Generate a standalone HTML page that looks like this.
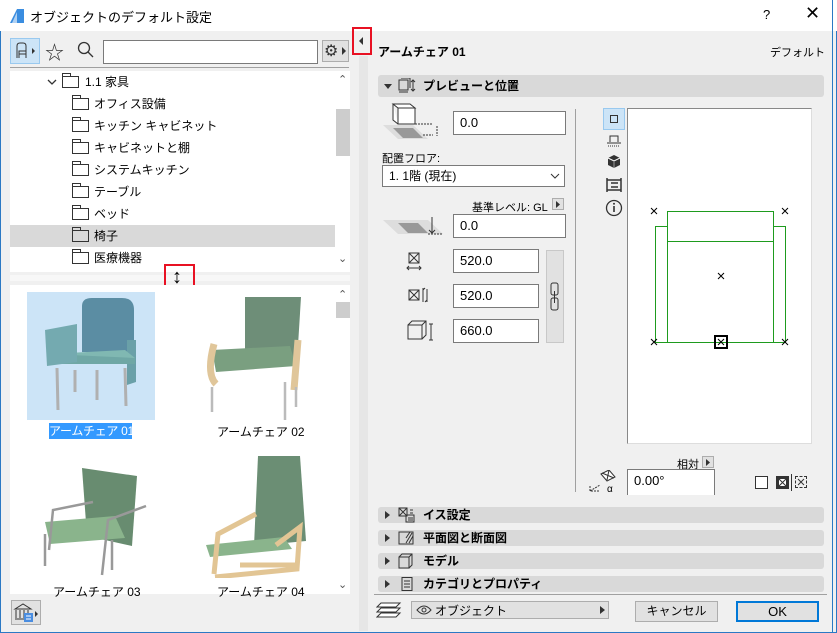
<!DOCTYPE html>
<html><head><meta charset="utf-8"><style>
*{box-sizing:border-box;margin:0;padding:0}
body{width:837px;height:633px;overflow:hidden;background:#f0f0f0;font-family:"Liberation Sans","Noto Sans CJK JP",sans-serif;font-size:12px;color:#000;position:relative}
.a{position:absolute}
.inp{position:absolute;background:#fff;border:1px solid #7a7a7a;font-size:13px;padding-left:6px;line-height:22px}
.sec{position:absolute;left:378px;width:446px;background:#d9d9d9;border-radius:3px;font-weight:bold;font-size:12px}
.row{position:absolute;left:10px;width:325px;height:22px;line-height:22px;font-size:12px}
.fold{position:absolute;width:17px;height:12px;border:1px solid #333;top:5px}
.fold:before{content:"";position:absolute;left:-1px;top:-4px;width:7px;height:3px;border:1px solid #333;border-bottom:none}
.lbl{position:absolute;font-size:12px;white-space:nowrap}
</style></head><body>
<div class="a" style="left:0;top:0;width:837px;height:633px;border:1px solid #2b79c4;border-top:none"></div>
<div class="a" style="left:0;top:0;width:837px;height:31px;background:#fff"></div>
<svg class="a" style="left:9px;top:8px" width="16" height="16"><path d="M1 15L8 1h7v14z" fill="#3a8de0"/><path d="M3 15L8 4v11z" fill="#fff" opacity=".6"/></svg>
<div class="a" style="left:30px;top:7px;font-size:13px">オブジェクトのデフォルト設定</div>
<div class="a" style="left:763px;top:7px;font-size:13px">?</div>
<div class="a" style="left:805px;top:3px;font-size:18px;font-weight:300">✕</div>

<div class="a" style="left:10px;top:38px;width:30px;height:26px;background:#cce4f7;border:1px solid #99c9ef"></div>
<svg class="a" style="left:14px;top:42px" width="24" height="18"><path d="M3 16V4q0-3 3-3h3q3 0 3 3v5H5v7M12 9v7M5 12h7" fill="none" stroke="#333"/><path d="M18 6l3 3-3 3z" fill="#333"/></svg>
<div class="a" style="left:45px;top:38px;font-size:19px;color:#333">☆</div>
<svg class="a" style="left:77px;top:41px" width="18" height="18"><circle cx="7" cy="7" r="5.5" fill="none" stroke="#333" stroke-width="1.3"/><path d="M11 11l5 5" stroke="#333" stroke-width="1.3"/></svg>
<div class="a" style="left:103px;top:40px;width:215px;height:24px;background:#fff;border:1px solid #7a7a7a"></div>
<div class="a" style="left:322px;top:40px;width:27px;height:22px;background:#e1e1e1;border:1px solid #adadad"></div>
<div class="a" style="left:324px;top:41px;font-size:16px;color:#333">⚙</div>
<svg class="a" style="left:341px;top:46px" width="6" height="10"><path d="M1 1l4 4-4 4z" fill="#333"/></svg>
<div class="a" style="left:10px;top:67px;width:339px;height:1px;background:#a0a0a0"></div>
<div class="a" style="left:352px;top:27px;width:20px;height:28px;border:2px solid #e81123"></div>
<svg class="a" style="left:358px;top:36px" width="6" height="10"><path d="M5 1L1 5l4 4z" fill="#333"/></svg>
<div class="a" style="left:359px;top:56px;width:9px;height:575px;background:#e6e6e6"></div>

<div class="a" style="left:10px;top:71px;width:325px;height:201px;background:#fff"></div>
<div class="a" style="left:335px;top:71px;width:15px;height:201px;background:#fff"></div>
<div class="a" style="left:336px;top:109px;width:14px;height:47px;background:#cdcdcd"></div>
<div class="a" style="left:338px;top:73px;font-size:11px;color:#555">⌃</div>
<div class="a" style="left:338px;top:252px;font-size:11px;color:#555">⌄</div>
<div class="row" style="top:71px"><svg class="a" style="left:37px;top:8px" width="10" height="7"><path d="M1 1l4 4 4-4" fill="none" stroke="#333" stroke-width="1.3"/></svg><div class="fold" style="left:52px"></div><span class="a" style="left:75px">1.1 家具</span></div>
<div class="row" style="top:93px"><div class="fold" style="left:62px"></div><span class="a" style="left:84px">オフィス設備</span></div>
<div class="row" style="top:115px"><div class="fold" style="left:62px"></div><span class="a" style="left:84px">キッチン キャビネット</span></div>
<div class="row" style="top:137px"><div class="fold" style="left:62px"></div><span class="a" style="left:84px">キャビネットと棚</span></div>
<div class="row" style="top:159px"><div class="fold" style="left:62px"></div><span class="a" style="left:84px">システムキッチン</span></div>
<div class="row" style="top:181px"><div class="fold" style="left:62px"></div><span class="a" style="left:84px">テーブル</span></div>
<div class="row" style="top:203px"><div class="fold" style="left:62px"></div><span class="a" style="left:84px">ベッド</span></div>
<div class="row" style="top:225px;background:#d9d9d9"><div class="fold" style="left:62px"></div><span class="a" style="left:84px">椅子</span></div>
<div class="row" style="top:247px"><div class="fold" style="left:62px"></div><span class="a" style="left:84px">医療機器</span></div>
<div class="a" style="left:10px;top:275px;width:340px;height:6px;background:#f7f7f7"></div>
<div class="a" style="left:164px;top:264px;width:31px;height:30px;border:2px solid #e81123"></div>
<div class="a" style="left:172px;top:266px;font-size:20px;font-weight:bold">↕</div>

<div class="a" style="left:10px;top:285px;width:325px;height:309px;background:#fff"></div>
<div class="a" style="left:335px;top:285px;width:15px;height:309px;background:#fff"></div>
<div class="a" style="left:336px;top:302px;width:14px;height:16px;background:#cdcdcd"></div>
<div class="a" style="left:338px;top:288px;font-size:11px;color:#555">⌃</div>
<div class="a" style="left:338px;top:578px;font-size:11px;color:#555">⌄</div>
<div class="a" style="left:27px;top:292px;width:128px;height:128px;background:#cce4f7"></div>
<svg class="a" style="left:27px;top:292px" width="128" height="128">
<path d="M55 14q0-8 10-8h30q12 0 12 12v42H55z" fill="#5b8da3"/>
<path d="M100 48h9v42l-9 3z" fill="#6aa0a8"/>
<path d="M22 62l76-4 10 8-78 6z" fill="#80b8b2"/><path d="M22 62v10l86 0v-6z" fill="#6fa7a5"/>
<path d="M18 38l32-6v38l-30 4z" fill="#74aab0"/>
<path d="M30 76l1 42M98 76l1 38M70 78v30M48 78v22" stroke="#b0b0b0" stroke-width="3"/>
</svg>
<div class="a" style="left:49px;top:423px;width:83px;height:16px;background:#3399ff;color:#fff;font-size:12px;line-height:16px;text-align:center;white-space:nowrap;letter-spacing:-0.3px;overflow:hidden">アームチェア 01</div>
<svg class="a" style="left:190px;top:292px" width="128" height="128">
<path d="M55 5h56l-4 65H55z" fill="#6e8e78"/>
<path d="M22 58l78-4 6 20-80 6z" fill="#7a9f80"/>
<path d="M24 52q-8 30 2 40M108 48l-4 50" stroke="#e0c69a" stroke-width="7" fill="none"/>
<path d="M22 95v25M95 90v38M106 95v20" stroke="#bbb" stroke-width="2.5"/>
</svg>
<div class="lbl" style="left:217px;top:423px">アームチェア 02</div>
<svg class="a" style="left:27px;top:450px" width="128" height="128">
<path d="M55 18l55 8-5 70-45-10z" fill="#688c70"/>
<path d="M18 72l70-6 10 22-75 6z" fill="#8ab48c"/>
<path d="M22 100l4-40 40-8M75 125l6-55 38-14M18 84v32M85 90v30" stroke="#999" stroke-width="2.5" fill="none"/>
</svg>
<div class="lbl" style="left:53px;top:583px">アームチェア 03</div>
<svg class="a" style="left:190px;top:450px" width="128" height="128">
<path d="M68 6h42l6 85-52 5z" fill="#6b8e74"/>
<path d="M16 95l78-8 8 12-82 8z" fill="#8ab48c"/>
<path d="M24 124l4-40 38-20M86 95l24-18-3 42-82 8M50 115h55" stroke="#e2c594" stroke-width="5" fill="none"/>
</svg>
<div class="lbl" style="left:217px;top:583px">アームチェア 04</div>
<div class="a" style="left:11px;top:600px;width:30px;height:25px;background:#e1e1e1;border:1px solid #adadad"></div>
<svg class="a" style="left:13px;top:602px" width="26" height="22"><path d="M2 7l8-5 8 5zM3 8v8M7 8v8M11 8v8M15 8v8M2 17h16" stroke="#333" fill="none"/><rect x="11" y="11" width="9" height="9" fill="#4a8de0"/><path d="M13 14h5M13 17h5" stroke="#fff"/><path d="M22 9l3 3-3 3z" fill="#333"/></svg>

<div class="a" style="left:378px;top:43px;font-weight:bold;font-size:12px">アームチェア 01</div>
<div class="a" style="left:770px;top:44px;font-size:11px">デフォルト</div>
<div class="a" style="left:832px;top:0;width:1px;height:633px;background:#2b79c4"></div>

<div class="sec" style="top:75px;height:22px;line-height:22px"><svg class="a" style="left:6px;top:9px" width="8" height="5"><path d="M0 0h8L4 5z" fill="#333"/></svg><svg class="a" style="left:20px;top:3px" width="20" height="16"><rect x="1" y="2" width="9" height="10" fill="none" stroke="#333"/><path d="M3 0h9v10M15 2v11M13 4l2-2 2 2M13 11l2 2 2-2M1 14h9" stroke="#333" fill="none"/></svg><span class="a" style="left:45px">プレビューと位置</span></div>

<svg class="a" style="left:383px;top:103px" width="62" height="36"><path d="M0 22h30l15 14H15z" fill="#ddd"/><path d="M10 25h20l10 10H20z" fill="#999"/><path d="M15 5h17v16H15zM10 1h17l5 4H15zM10 1v16l5 4" fill="#fff" stroke="#333"/><path d="M32 21h17M40 32h10M54 23v10" stroke="#333" stroke-dasharray="2 1"/></svg>
<div class="inp" style="left:453px;top:111px;width:113px;height:24px">0.0</div>
<div class="a" style="left:382px;top:150px;font-size:11px">配置フロア:</div>
<div class="inp" style="left:382px;top:165px;width:183px;height:22px;line-height:20px;font-size:12px">1. 1階 (現在)</div>
<svg class="a" style="left:550px;top:173px" width="10" height="6"><path d="M1 1l4 4 4-4" fill="none" stroke="#333"/></svg>
<div class="a" style="left:472px;top:199px;font-size:11px;white-space:nowrap">基準レベル: GL</div>
<div class="a" style="left:552px;top:198px;width:12px;height:12px;background:#e1e1e1;border:1px solid #adadad"></div>
<svg class="a" style="left:556px;top:201px" width="5" height="7"><path d="M0 0l4 3.5L0 7z" fill="#333"/></svg>
<svg class="a" style="left:383px;top:215px" width="62" height="24"><path d="M0 5h45l15 14H15z" fill="#ddd"/><path d="M15 8h20l10 10H25z" fill="#999"/><path d="M49 2v16M46 15l3 3 3-3" stroke="#333" fill="none"/><path d="M45 19h15" stroke="#333" stroke-dasharray="2 1"/></svg>
<div class="inp" style="left:453px;top:214px;width:113px;height:24px">0.0</div>
<svg class="a" style="left:406px;top:251px" width="20" height="24"><rect x="3" y="2" width="10" height="10" fill="none" stroke="#333"/><path d="M3 2l10 10M13 2L3 12M1 17h14M3 15l-2 2 2 2M13 15l2 2-2 2" stroke="#333" fill="none"/></svg>
<div class="inp" style="left:453px;top:249px;width:86px;height:24px">520.0</div>
<svg class="a" style="left:408px;top:287px" width="24" height="18"><rect x="1" y="3" width="10" height="10" fill="none" stroke="#333"/><path d="M1 3l10 10M11 3L1 13M15 1v14M19 2v13M17 1l-2 2M17 15l2-2" stroke="#333" fill="none"/></svg>
<div class="inp" style="left:453px;top:284px;width:86px;height:24px">520.0</div>
<svg class="a" style="left:407px;top:320px" width="28" height="24"><path d="M1 5h14v14H1zM1 5l4-4h14v14l-4 4M15 5l4-4" fill="none" stroke="#333"/><path d="M24 4v16M22 4h4M22 20h4" stroke="#333"/></svg>
<div class="inp" style="left:453px;top:319px;width:86px;height:24px">660.0</div>
<div class="a" style="left:546px;top:250px;width:18px;height:93px;background:#e1e1e1;border:1px solid #c8c8c8"></div>
<svg class="a" style="left:550px;top:282px" width="10" height="30"><rect x="1" y="1" width="7" height="12" rx="2" fill="none" stroke="#333"/><rect x="1" y="16" width="7" height="12" rx="2" fill="none" stroke="#333"/><path d="M4.5 9v12" stroke="#333"/></svg>
<div class="a" style="left:575px;top:109px;width:1px;height:383px;background:#a0a0a0"></div>

<div class="a" style="left:603px;top:108px;width:22px;height:22px;background:#cce4f7;border:1px solid #99c9ef"></div>
<div class="a" style="left:610px;top:115px;width:8px;height:8px;border:1.3px solid #333"></div>
<svg class="a" style="left:606px;top:134px" width="16" height="14"><path d="M4 8V2h8v6M1 9h14" stroke="#333" fill="none"/><path d="M2 12h12" stroke="#333" stroke-dasharray="1 1"/></svg>
<svg class="a" style="left:607px;top:154px" width="14" height="15"><path d="M7 1l6 3v7l-6 3-6-3V4z" fill="#333"/><path d="M1 4l6 3 6-3" stroke="#fff" fill="none"/><path d="M7 7v7" stroke="#999"/></svg>
<svg class="a" style="left:606px;top:177px" width="16" height="16"><path d="M1 1v14M15 1v14M1 3h14M1 13h14M5 6h7M5 10h7" stroke="#333" stroke-width="1.5" fill="none"/></svg>
<svg class="a" style="left:605px;top:199px" width="18" height="18"><circle cx="9" cy="9" r="7.5" fill="none" stroke="#333" stroke-width="1.3"/><path d="M9 7v6" stroke="#333" stroke-width="1.6"/><circle cx="9" cy="4.8" r="1" fill="#333"/></svg>

<div class="a" style="left:627px;top:108px;width:185px;height:336px;background:#fff;border:1px solid #888;border-right-color:#ddd;border-bottom-color:#ddd"></div>
<svg class="a" style="left:627px;top:108px" width="185" height="336">
<g stroke="#1e9b1e" fill="none"><rect x="28.5" y="118.5" width="130" height="116"/><rect x="40.5" y="103.5" width="106" height="131" fill="#fff"/><path d="M40 133.5h106"/></g>
<g stroke="#000" fill="none"><path d="M24 100l6 6M30 100l-6 6M155 100l6 6M161 100l-6 6M91 165l6 6M97 165l-6 6M24 231l6 6M30 231l-6 6M155 231l6 6M161 231l-6 6M91 231l6 6M97 231l-6 6"/><rect x="88" y="228" width="12" height="12" stroke-width="2"/></g>
</svg>
<div class="a" style="left:677px;top:456px;font-size:11px">相対</div>
<div class="a" style="left:702px;top:456px;width:12px;height:12px;background:#e1e1e1;border:1px solid #adadad"></div>
<svg class="a" style="left:706px;top:459px" width="5" height="7"><path d="M0 0l4 3.5L0 7z" fill="#333"/></svg>
<svg class="a" style="left:588px;top:470px" width="30" height="24"><path d="M13 4l8-4 6 7-8 4z" fill="#fff" stroke="#333"/><path d="M14 3l12 5M21 0l-2 10" stroke="#333"/><path d="M2 16v5h10M2 21l10-6" stroke="#333" stroke-dasharray="2 1" fill="none"/><text x="19" y="22" font-size="10" font-family="Liberation Sans">α</text></svg>
<div class="inp" style="left:627px;top:469px;width:88px;height:26px;border-bottom:none">0.00°</div>
<div class="a" style="left:755px;top:476px;width:13px;height:13px;background:#fff;border:1px solid #333"></div>
<div class="a" style="left:776px;top:476px;width:13px;height:13px;background:#333"></div>
<svg class="a" style="left:776px;top:476px" width="13" height="13"><rect x="3" y="3" width="7" height="7" fill="#fff"/><path d="M3 3l7 7M10 3l-7 7" stroke="#333"/></svg>
<div class="a" style="left:791px;top:474px;width:1px;height:17px;background:#333"></div>
<div class="a" style="left:795px;top:476px;width:12px;height:12px;border:1px dashed #333"></div>
<svg class="a" style="left:795px;top:476px" width="12" height="12"><path d="M3 3l6 6M9 3l-6 6" stroke="#333"/></svg>

<div class="sec" style="top:507px;height:16px;line-height:16px"><svg class="a" style="left:7px;top:4px" width="5" height="8"><path d="M0 0l5 4-5 4z" fill="#333"/></svg><svg class="a" style="left:20px;top:0" width="18" height="16"><rect x="1" y="1" width="8" height="8" fill="none" stroke="#333"/><path d="M1 1l8 8M9 1l-8 8M8 8h8v7H8zM10 11h5M10 13h5M12 3h3M12 6h3" stroke="#333" fill="none"/></svg><span class="a" style="left:45px">イス設定</span></div>
<div class="sec" style="top:530px;height:16px;line-height:16px"><svg class="a" style="left:7px;top:4px" width="5" height="8"><path d="M0 0l5 4-5 4z" fill="#333"/></svg><svg class="a" style="left:20px;top:1px" width="18" height="14"><rect x="1" y="1" width="14" height="12" fill="none" stroke="#333"/><path d="M8 12l6-10M11 12l4-7M8 7l4-6" stroke="#333"/></svg><span class="a" style="left:45px">平面図と断面図</span></div>
<div class="sec" style="top:553px;height:16px;line-height:16px"><svg class="a" style="left:7px;top:4px" width="5" height="8"><path d="M0 0l5 4-5 4z" fill="#333"/></svg><svg class="a" style="left:20px;top:0" width="16" height="16"><path d="M1 4h10v11H1zM1 4l3-3h10v11l-3 3M11 4l3-3" fill="none" stroke="#333"/></svg><span class="a" style="left:45px">モデル</span></div>
<div class="sec" style="top:576px;height:16px;line-height:16px"><svg class="a" style="left:7px;top:4px" width="5" height="8"><path d="M0 0l5 4-5 4z" fill="#333"/></svg><svg class="a" style="left:23px;top:1px" width="12" height="14"><rect x="1" y="0.5" width="10" height="13" fill="none" stroke="#333"/><path d="M3 4h6M3 7h6M3 10h6" stroke="#333"/></svg><span class="a" style="left:45px">カテゴリとプロパティ</span></div>
<div class="a" style="left:374px;top:594px;width:453px;height:1px;background:#a0a0a0"></div>

<svg class="a" style="left:376px;top:602px" width="26" height="16"><path d="M5 1h19l-4 4H1zM5 6h19l-4 4H1zM5 11h19l-4 4H1z" fill="#fff" stroke="#333"/></svg>
<div class="a" style="left:411px;top:601px;width:198px;height:18px;background:#e1e1e1;border:1px solid #adadad"></div>
<svg class="a" style="left:416px;top:605px" width="16" height="10"><path d="M1 5q7-8 14 0q-7 8-14 0z" fill="none" stroke="#333"/><circle cx="8" cy="5" r="2" fill="none" stroke="#333"/></svg>
<div class="a" style="left:435px;top:602px;font-size:12px">オブジェクト</div>
<svg class="a" style="left:600px;top:606px" width="5" height="8"><path d="M0 0l5 4-5 4z" fill="#333"/></svg>
<div class="a" style="left:635px;top:601px;width:83px;height:21px;background:#e1e1e1;border:1px solid #adadad;text-align:center;line-height:19px">キャンセル</div>
<div class="a" style="left:736px;top:601px;width:83px;height:21px;background:#e1e1e1;border:2px solid #0078d7;text-align:center;line-height:17px;font-size:13px">OK</div>
</body></html>
